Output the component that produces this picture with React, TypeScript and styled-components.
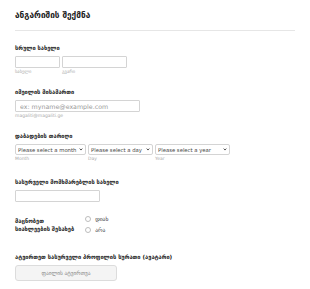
import React from 'react';
import styled, { createGlobalStyle } from 'styled-components';

const GlobalStyle = createGlobalStyle`
  body {
    margin: 0;
    background: #fff;
    font-family: "DejaVu Sans", Verdana, sans-serif;
  }
`;

const Page = styled.div`
  width: 310px;
  height: 289px;
  padding: 0 15px;
  box-sizing: border-box;
  overflow: hidden;
`;

const Title = styled.h1`
  margin: 0;
  padding-top: 10px;
  padding-bottom: 9px;
  font-size: 8.3px;
  line-height: 11px;
  font-weight: bold;
  color: #222;
  border-bottom: 1px solid #e6e6e6;
`;

const Field = styled.div<{ $top: number }>`
  margin-top: ${(p) => p.$top}px;
`;

const Label = styled.div`
  font-size: 5.7px;
  line-height: 8px;
  font-weight: bold;
  color: #222;
  margin-bottom: 4px;
`;

const Row = styled.div`
  display: flex;
  gap: 2px;
`;

const Col = styled.div`
  display: flex;
  flex-direction: column;
`;

const TextInput = styled.input<{ $w: number }>`
  display: block;
  width: ${(p) => p.$w}px;
  height: 12px;
  box-sizing: border-box;
  border: 1px solid #d4d4d4;
  border-radius: 1px;
  padding: 0 4px;
  margin: 0;
  font-family: "DejaVu Sans", Verdana, sans-serif;
  font-size: 6.3px;
  color: #444;
  outline: none;
  &::placeholder {
    color: #9a9a9a;
  }
`;

const Sub = styled.span`
  font-size: 4.5px;
  line-height: 6px;
  color: #aaa;
  margin-top: 1px;
`;

const SelectWrap = styled.div`
  position: relative;
  display: flex;
`;

const Select = styled.select<{ $w: number }>`
  appearance: none;
  display: block;
  width: ${(p) => p.$w}px;
  height: 11px;
  box-sizing: border-box;
  border: 1px solid #d4d4d4;
  border-radius: 2px;
  background: #fff;
  margin: 0;
  padding: 0 7px 0 2px;
  font-family: "DejaVu Sans", Verdana, sans-serif;
  font-size: 5.3px;
  color: #444;
  outline: none;
`;

const Chevron = styled.svg`
  position: absolute;
  right: 3px;
  top: 4px;
  width: 4px;
  height: 3px;
  pointer-events: none;
`;

const RadioBlock = styled.div`
  display: flex;
  align-items: flex-start;
  gap: 11px;
  margin-top: 13px;
`;

const RadioLabel = styled.div`
  font-size: 5.7px;
  line-height: 8px;
  font-weight: bold;
  color: #222;
  padding-top: 2px;
`;

const RadioList = styled.div`
  display: flex;
  flex-direction: column;
  gap: 3px;
`;

const RadioOption = styled.label`
  display: flex;
  align-items: center;
  gap: 4px;
  font-size: 5.6px;
  line-height: 8px;
  color: #333;
`;

const RadioDot = styled.span`
  width: 6px;
  height: 6px;
  box-sizing: border-box;
  border: 1px solid #bdbdbd;
  border-radius: 50%;
  background: #fff;
`;

const UploadButton = styled.button`
  display: block;
  width: 102px;
  height: 16px;
  box-sizing: border-box;
  border: 1px solid #dcdcdc;
  border-radius: 3px;
  background: #f4f4f4;
  font-family: "DejaVu Sans", Verdana, sans-serif;
  font-size: 5.4px;
  color: #888;
  padding: 0;
`;

const DateSelect = ({ w, text }: { w: number; text: string }) => (
  <SelectWrap>
    <Select $w={w}>
      <option>{text}</option>
    </Select>
    <Chevron viewBox="0 0 10 8">
      <path d="M1.5 1.5 L5 5.5 L8.5 1.5" fill="none" stroke="#333" strokeWidth="2.2" />
    </Chevron>
  </SelectWrap>
);

const App = () => {
  return (
    <>
      <GlobalStyle />
      <Page>
        <Title>ანგარიშის შექმნა</Title>

        <Field $top={13}>
          <Label>სრული სახელი</Label>
          <Row>
            <Col>
              <TextInput $w={45} />
              <Sub>სახელი</Sub>
            </Col>
            <Col>
              <TextInput $w={65} />
              <Sub>გვარი</Sub>
            </Col>
          </Row>
        </Field>

        <Field $top={13}>
          <Label>იმეილის მისამართი</Label>
          <Col>
            <TextInput $w={125} placeholder="ex: myname@example.com" />
            <Sub>magaliti@magaliti.ge</Sub>
          </Col>
        </Field>

        <Field $top={13}>
          <Label>დაბადების თარიღი</Label>
          <Row>
            <Col>
              <DateSelect w={71} text="Please select a month" />
              <Sub>Month</Sub>
            </Col>
            <Col>
              <DateSelect w={65} text="Please select a day" />
              <Sub>Day</Sub>
            </Col>
            <Col>
              <DateSelect w={75} text="Please select a year" />
              <Sub>Year</Sub>
            </Col>
          </Row>
        </Field>

        <Field $top={16}>
          <Label>სასურველი მომხმარებლის სახელი</Label>
          <TextInput $w={85} />
        </Field>

        <RadioBlock>
          <RadioLabel>
            მაცნობეთ
            <br />
            სიახლეების შესახებ
          </RadioLabel>
          <RadioList>
            <RadioOption>
              <RadioDot />
              დიახ
            </RadioOption>
            <RadioOption>
              <RadioDot />
              არა
            </RadioOption>
          </RadioList>
        </RadioBlock>

        <Field $top={19}>
          <Label>ატვირთეთ სასურველი პროფილის სურათი (ავატარი)</Label>
          <UploadButton>ფაილის ატვირთვა</UploadButton>
        </Field>
      </Page>
    </>
  );
};

export default App;
